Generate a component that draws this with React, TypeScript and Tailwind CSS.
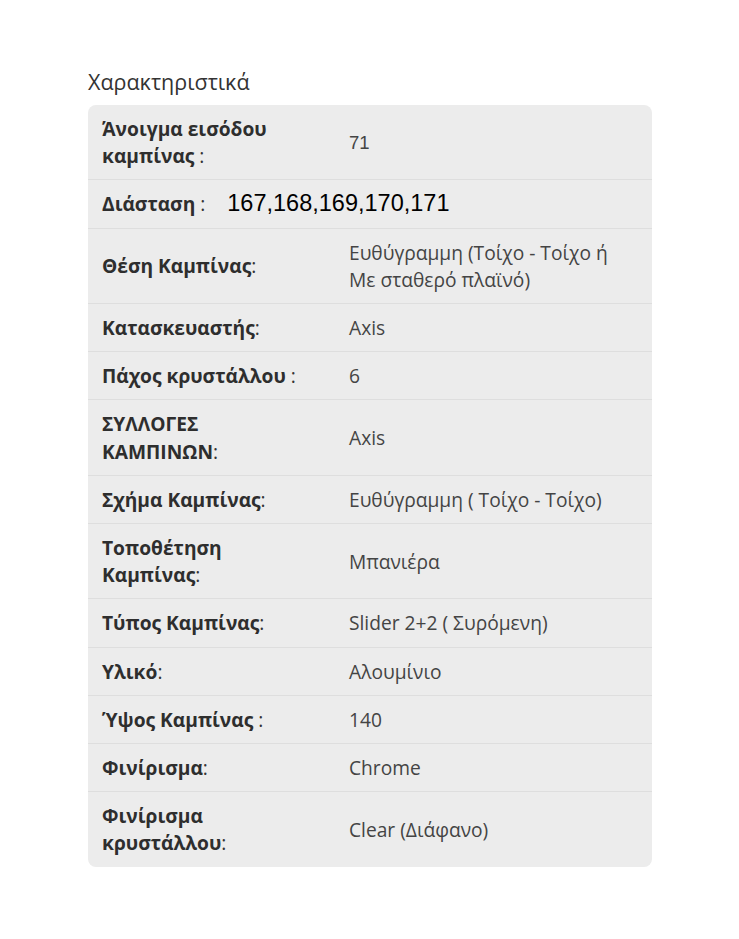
type Row = {
  label: string;
  colon: string;
  value: string;
  inline?: boolean;
  arial?: boolean;
};

const rows: Row[] = [
  { label: "Άνοιγμα εισόδου καμπίνας", colon: " :", value: "71", arial: true },
  { label: "Διάσταση", colon: " :", value: "167,168,169,170,171", inline: true },
  { label: "Θέση Καμπίνας", colon: ":", value: "Ευθύγραμμη (Τοίχο - Τοίχο ή Με σταθερό πλαϊνό)" },
  { label: "Κατασκευαστής", colon: ":", value: "Axis" },
  { label: "Πάχος κρυστάλλου", colon: " :", value: "6" },
  { label: "ΣΥΛΛΟΓΕΣ ΚΑΜΠΙΝΩΝ", colon: ":", value: "Axis" },
  { label: "Σχήμα Καμπίνας", colon: ":", value: "Ευθύγραμμη ( Τοίχο - Τοίχο)" },
  { label: "Τοποθέτηση Καμπίνας", colon: ":", value: "Μπανιέρα" },
  { label: "Τύπος Καμπίνας", colon: ":", value: "Slider 2+2 ( Συρόμενη)" },
  { label: "Υλικό", colon: ":", value: "Αλουμίνιο" },
  { label: "Ύψος Καμπίνας", colon: " :", value: "140" },
  { label: "Φινίρισμα", colon: ":", value: "Chrome" },
  { label: "Φινίρισμα κρυστάλλου", colon: ":", value: "Clear (Διάφανο)" },
];

export default function App() {
  return (
    <div className="min-h-screen bg-white font-['Open_Sans',sans-serif] text-[#333]">
      <div className="pl-[88px] pt-[67px] w-[652px]">
        <h2 className="text-[21.5px] leading-[30px] text-[#333] mb-[8px]">Χαρακτηριστικά</h2>
        <div className="rounded-[8px] bg-[#ececec] overflow-hidden">
          {rows.map((r, i) => (
            <div
              key={i}
              className={`flex items-center ${i > 0 ? "border-t border-[#dedede]" : ""}`}
            >
              {r.inline ? (
                <div className="flex-1 pl-[14px] py-[10px] text-[19.2px] leading-[27.2px] whitespace-nowrap">
                  <span className="font-bold text-[#2e2e2e]">{r.label}</span>
                  <span className="text-[#333]">{r.colon}</span>
                  <span className="ml-[22px] font-['Liberation_Sans',sans-serif] text-[23.5px] text-black">
                    {r.value}
                  </span>
                </div>
              ) : (
                <>
                  <div className="w-[247px] shrink-0 pl-[14px] pr-[30px] py-[10px] text-[19.2px] leading-[27.2px]">
                    <span className="font-bold text-[#2e2e2e]">{r.label}</span>
                    <span className="text-[#333]">{r.colon}</span>
                  </div>
                  <div className="flex-1 pl-[14px] pr-[28px] py-[10px] text-[19.2px] leading-[27.2px] text-[#444]">
                    {r.arial ? (
                      <span className="font-['Liberation_Sans',sans-serif] text-[18.5px]">{r.value}</span>
                    ) : (
                      r.value
                    )}
                  </div>
                </>
              )}
            </div>
          ))}
        </div>
      </div>
    </div>
  );
}
